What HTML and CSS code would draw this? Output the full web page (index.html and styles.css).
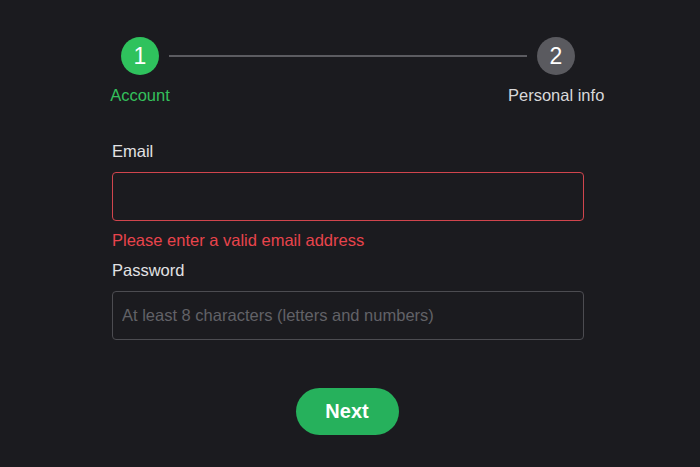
FILE: index.html
```html
<!DOCTYPE html>
<html lang="en">
<head>
    <meta charset="UTF-8">
    <meta name="viewport" content="width=device-width, initial-scale=1.0">
    <title>Sign Up</title>
    <link rel="stylesheet" href="styles.css">
</head>
<body>
    <div class="stepper">
        <div class="step-circle active">1</div>
        <div class="step-line"></div>
        <div class="step-circle">2</div>
        <div class="step-label active">Account</div>
        <div class="step-label">Personal info</div>
    </div>

    <form class="signup-form" onsubmit="return false">
        <label class="field-label" for="email">Email</label>
        <input type="email" id="email" class="field-input error">
        <div class="field-error">Please enter a valid email address</div>

        <label class="field-label" for="password">Password</label>
        <input type="password" id="password" class="field-input" placeholder="At least 8 characters (letters and numbers)">

        <div class="actions">
            <button type="submit" class="next-btn">Next</button>
        </div>
    </form>
</body>
</html>
```

FILE: styles.css
```css
body {
    font-family: 'Liberation Sans', Arial, sans-serif;
    margin: 0;
    background-color: #1b1b1f;
    color: #e2e2e4;
    font-size: 16.5px;
}
.stepper {
    width: 494px;
    margin: 37px 0 0 110px;
    display: grid;
    grid-template-columns: 60px 1fr 96px;
    align-items: center;
}
.step-circle {
    width: 38px;
    height: 38px;
    border-radius: 50%;
    background-color: #5a5a5f;
    color: #ffffff;
    font-size: 23px;
    display: flex;
    align-items: center;
    justify-content: center;
    justify-self: center;
}
.step-circle.active {
    background-color: #2fc25d;
}
.step-line {
    height: 2px;
    background-color: #5c5c61;
    margin: 0 -19px 0 -1px;
}
.step-label {
    margin-top: 11px;
    line-height: 18px;
    text-align: center;
    white-space: nowrap;
    color: #d8d8da;
}
.step-label:nth-of-type(4) {
    grid-column: 1;
}
.step-label:nth-of-type(5) {
    grid-column: 3;
}
.step-label.active {
    color: #34c05c;
}
.signup-form {
    width: 472px;
    margin: 38px 0 0 112px;
    display: flex;
    flex-direction: column;
}
.field-label {
    line-height: 18px;
    color: #e2e2e4;
}
.field-input {
    margin-top: 12px;
    height: 49px;
    box-sizing: border-box;
    padding: 0 9px;
    background-color: #1b1b1f;
    border: 1px solid #4c4c51;
    border-radius: 4px;
    font-family: inherit;
    font-size: 16.5px;
    color: #e2e2e4;
}
.field-input::placeholder {
    color: #626267;
}
.field-input.error {
    border-color: #d0454d;
}
.field-error {
    margin: 10px 0 12px;
    line-height: 18px;
    color: #e8444c;
}
.actions {
    display: flex;
    justify-content: center;
    margin-top: 48px;
    padding-right: 2px;
}
.next-btn {
    width: 103px;
    height: 47px;
    border: none;
    border-radius: 24px;
    background-color: #26b15c;
    color: #ffffff;
    font-family: inherit;
    font-size: 20px;
    font-weight: bold;
    cursor: pointer;
}
```
